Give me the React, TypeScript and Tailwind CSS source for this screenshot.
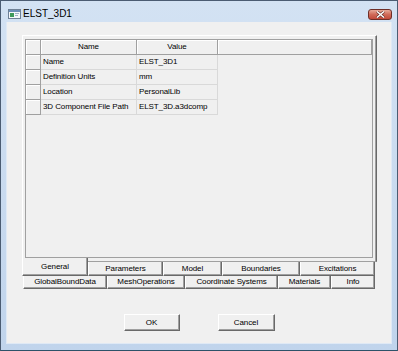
const font = "font-['Liberation_Sans',Arial,sans-serif]";

const rows = [
  ["Name", "ELST_3D1"],
  ["Definition Units", "mm"],
  ["Location", "PersonalLib"],
  ["3D Component File Path", "ELST_3D.a3dcomp"],
];

const tabsTop = [
  { label: "General", w: 66, selected: true },
  { label: "Parameters", w: 75 },
  { label: "Model", w: 59 },
  { label: "Boundaries", w: 78 },
  { label: "Excitations", w: 75 },
];

const tabsBottom = [
  { label: "GlobalBoundData", w: 84 },
  { label: "MeshOperations", w: 78 },
  { label: "Coordinate Systems", w: 93 },
  { label: "Materials", w: 53 },
  { label: "Info", w: 44 },
];

function TitleIcon() {
  return (
    <svg width="13" height="10" viewBox="0 0 13 10">
      <rect x="0.5" y="0.5" width="12" height="9" fill="#f4f7fb" stroke="#6f8196" />
      <rect x="1" y="1" width="11" height="2" fill="#6d8fb8" />
      <rect x="2" y="4" width="4" height="4" fill="#3f9a5c" />
      <rect x="7" y="4" width="4" height="1" fill="#9fb0c4" />
      <rect x="7" y="6" width="3" height="1" fill="#9fb0c4" />
    </svg>
  );
}

function CloseButton() {
  return (
    <div className="mt-[8px] mr-[5px] flex h-[11px] w-[24px] items-center justify-center rounded-[3px] border border-[#6e2f28] bg-gradient-to-b from-[#e6a999] via-[#d06a58] to-[#c24a3a]">
      <svg width="9" height="7" viewBox="0 0 9 7">
        <path d="M1 0.5 L8 6.5 M8 0.5 L1 6.5" stroke="#5a2a24" strokeWidth="2.6" />
        <path d="M1 0.5 L8 6.5 M8 0.5 L1 6.5" stroke="#ffffff" strokeWidth="1.5" />
      </svg>
    </div>
  );
}

function HeaderCell({ w, children }: { w?: number; children?: React.ReactNode }) {
  return (
    <div
      className={`flex h-[15px] shrink-0 items-center justify-center border-r border-b border-[#a0a0a0] bg-[#f0f0f0] text-[8px] tracking-[-0.1px] text-black shadow-[inset_1px_1px_0_#ffffff] ${w ? "" : "flex-1"}`}
      style={w ? { width: w } : undefined}
    >
      {children}
    </div>
  );
}

function DataCell({ w, children }: { w: number; children: React.ReactNode }) {
  return (
    <div
      className="flex h-[15px] shrink-0 items-center whitespace-nowrap border-r border-b border-[#d9d9d9] pl-[2px] text-[8px] tracking-[-0.1px] text-black"
      style={{ width: w }}
    >
      {children}
    </div>
  );
}

function Tab({ label, w, selected, h }: { label: string; w: number; selected?: boolean; h: number }) {
  if (selected) {
    return (
      <div
        className="relative z-10 -mt-[4px] flex h-[18px] shrink-0 items-end justify-center border-l border-r border-b border-l-white border-r-[#696969] border-b-[#696969] bg-[#f0f0f0] pb-[2px] text-[8px] tracking-[-0.1px] shadow-[inset_-1px_-1px_0_#a0a0a0]"
        style={{ width: w }}
      >
        {label}
      </div>
    );
  }
  return (
    <div
      className="flex shrink-0 items-center justify-center border-l border-r border-b border-l-white border-r-[#696969] border-b-[#696969] bg-[#f0f0f0] text-[8px] tracking-[-0.1px] shadow-[inset_-1px_-1px_0_#a0a0a0]"
      style={{ width: w, height: h }}
    >
      {label}
    </div>
  );
}

function Button({ label, w }: { label: string; w: number }) {
  return (
    <div
      className="flex h-[17px] items-center justify-center border border-t-white border-l-white border-r-[#696969] border-b-[#696969] bg-[#f0f0f0] text-[8px] tracking-[-0.1px] shadow-[inset_-1px_-1px_0_#a0a0a0]"
      style={{ width: w }}
    >
      {label}
    </div>
  );
}

export default function App() {
  return (
    <div className={`flex h-[351px] w-[398px] flex-col border border-[#4b5c72] border-b-[#2d5269] bg-gradient-to-b from-[#d3e2f3] to-[#c0d4ec] ${font}`}>
      {/* Title bar */}
      <div className="flex h-[21px] shrink-0 items-start">
        <div className="mt-[8px] ml-[7px]">
          <TitleIcon />
        </div>
        <span className="mt-[7px] ml-[2px] text-[10px] leading-[11px] text-black">ELST_3D1</span>
        <div className="ml-auto">
          <CloseButton />
        </div>
      </div>

      {/* Client area */}
      <div className="mx-[5px] flex h-[322px] shrink-0 flex-col border-l border-r border-b border-[#dfe9f5] bg-[#f0f0f0] pt-[13px] pl-[15px]">
        {/* Tab page */}
        <div className="h-[227px] w-[355px] border-t border-l border-r border-b border-t-white border-l-white border-r-[#696969] border-b-[#a0a0a0] pt-[3px] pl-[2px] shadow-[inset_-1px_0_0_#a0a0a0]">
          <div className="flex h-[219px] w-[348px] flex-col border border-[#a0a0a0] bg-[#f0f0f0]">
            <div className="flex">
              <HeaderCell w={15} />
              <HeaderCell w={96}>Name</HeaderCell>
              <HeaderCell w={81}>Value</HeaderCell>
              <HeaderCell />
            </div>
            {rows.map(([k, v]) => (
              <div key={k} className="flex">
                <div className="h-[15px] w-[15px] shrink-0 border-r border-b border-[#a0a0a0] shadow-[inset_1px_1px_0_#ffffff]" />
                <DataCell w={96}>{k}</DataCell>
                <DataCell w={81}>{v}</DataCell>
              </div>
            ))}
          </div>
        </div>

        {/* Tabs */}
        <div className="flex items-start">
          {tabsTop.map((t) => (
            <Tab key={t.label} label={t.label} w={t.w} selected={t.selected} h={14} />
          ))}
        </div>
        <div className="ml-[1px] flex items-start">
          {tabsBottom.map((t) => (
            <Tab key={t.label} label={t.label} w={t.w} h={13} />
          ))}
        </div>

        {/* Buttons */}
        <div className="mt-[25px] -ml-[15px] flex justify-center gap-[38px]">
          <Button label="OK" w={56} />
          <Button label="Cancel" w={57} />
        </div>
      </div>
    </div>
  );
}
